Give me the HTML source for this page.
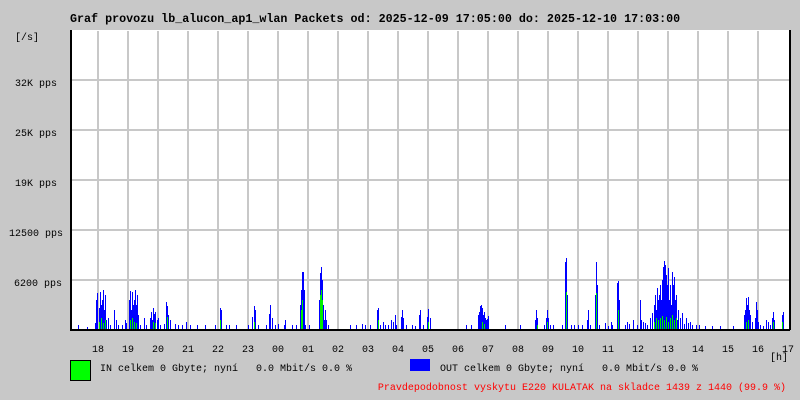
<!DOCTYPE html>
<html><head><meta charset="utf-8"><style>
html,body{margin:0;padding:0;background:#c8c8c8;}
svg{display:block;}
text{font-family:"Liberation Mono","DejaVu Sans Mono",monospace;font-size:10px;white-space:pre;}
</style></head><body>
<svg width="800" height="400" xmlns="http://www.w3.org/2000/svg" xml:space="preserve">
<rect width="800" height="400" fill="#c8c8c8"/>
<text x="70" y="22" font-weight="bold" style="font-size:11.7px">Graf provozu lb_alucon_ap1_wlan Packets od: 2025-12-09 17:05:00 do: 2025-12-10 17:03:00</text>
<rect x="70" y="30" width="720" height="300" fill="#fff"/>
<g stroke="#c8c8c8" stroke-width="2" shape-rendering="crispEdges">
<path d="M71 80H789M71 130H789M71 180H789M71 230H789M71 280H789"/>
<path d="M98 31V329M128 31V329M158 31V329M188 31V329M218 31V329M248 31V329M278 31V329M308 31V329M338 31V329M368 31V329M398 31V329M428 31V329M458 31V329M488 31V329M518 31V329M548 31V329M578 31V329M608 31V329M638 31V329M668 31V329M698 31V329M728 31V329M758 31V329"/>
</g>
<g transform="translate(0.5,0)" shape-rendering="crispEdges">
<g stroke="#0000ff" stroke-width="1" fill="none">
<path d="M78 329V325M87 329V327M95 329V323M96 329V300M97 329V293M99 329V308M100 329V292M101 329V305M102 329V300M103 329V290M104 329V310M105 329V295M106 329V320M108 329V318M110 329V325M114 329V310M116 329V320M118 329V325M122 329V325M125 329V320M126 329V323
M129 329V300M130 329V291M131 329V310M132 329V292M133 329V305M134 329V300M135 329V290M136 329V305M137 329V295M138 329V315M140 329V325M144 329V318M146 329V325
M150 329V318M151 329V312M152 329V320M153 329V308M154 329V314M155 329V312M157 329V320M158 329V318M160 329V325M164 329V324M166 329V302M167 329V306M168 329V315M170 329V320M175 329V324M178 329V325
M182 329V325M186 329V322M190 329V325M197 329V325M205 329V325M215 329V325M220 329V308M221 329V310M226 329V325M229 329V325
M236 329V325M248 329V325M252 329V317M254 329V306M255 329V310M258 329V325M266 329V325M269 329V314M270 329V305M272 329V318M275 329V325M278 329V324M284 329V325M285 329V320
M292 329V325M296 329V325M300 329V305M301 329V290M302 329V272M303 329V272M304 329V290M305 329V325M309 329V325M319 329V300M320 329V273M321 329V267M322 329V280M323 329V305M324 329V320M325 329V310M326 329V320M328 329V325
M350 329V325M356 329V325M362 329V324M365 329V325M370 329V325M377 329V310M378 329V308M380 329V325M383 329V322M385 329V325M388 329V325M391 329V320M393 329V322M395 329V315M396 329V325M401 329V317M402 329V310M403 329V318M406 329V325M412 329V325M415 329V326M419 329V315M420 329V310M423 329V325M427 329V317M428 329V309M430 329V318
M466 329V325M471 329V325M478 329V315M479 329V312M480 329V306M481 329V305M482 329V308M483 329V315M484 329V312M485 329V318M486 329V320M487 329V319M488 329V316
M505 329V325M520 329V325M535 329V320M536 329V310M537 329V318M544 329V325M546 329V318M547 329V310M548 329V318M550 329V325M553 329V325M562 329V325M565 329V262M566 329V258M567 329V295M571 329V325M574 329V325M578 329V325M582 329V325
M587 329V320M588 329V310M590 329V325M595 329V295M596 329V262M597 329V285M599 329V325M605 329V323M608 329V326M611 329V322M612 329V325M617 329V283M618 329V281M619 329V300
M625 329V325M627 329V322M629 329V324M633 329V320M637 329V325M640 329V300M641 329V320M643 329V322M645 329V323M647 329V325M650 329V318M652 329V313M654 329V305M655 329V295M656 329V310M657 329V288M658 329V300M659 329V295M660 329V285M661 329V300M662 329V280M663 329V267M664 329V261M665 329V265M666 329V275M667 329V285M668 329V268M669 329V300M670 329V285M671 329V305M672 329V272M673 329V285M674 329V277M675 329V300M676 329V295M677 329V320M678 329V310M680 329V318M682 329V313M684 329V324M686 329V318M688 329V323M690 329V322M692 329V325M696 329V325M699 329V325M705 329V326M712 329V326M720 329V326
M733 329V326M744 329V315M745 329V310M746 329V298M747 329V305M748 329V297M749 329V310M750 329V315M752 329V322M755 329V318M756 329V302M757 329V310M758 329V322M760 329V325M763 329V326M766 329V320M768 329V322M770 329V325M772 329V318M773 329V312M774 329V320M782 329V315M783 329V312M789 329V322"/>
</g>
<g stroke="#00ee00" stroke-width="1" fill="none">
<path d="M99 329V322M101 329V318M103 329V323M105 329V320M130 329V320M132 329V318M134 329V322M136 329V323M153 329V322M155 329V323M167 329V317M220 329V320M254 329V322M301 329V310M302 329V300M320 329V295M321 329V290M322 329V300M378 329V320M428 329V322M482 329V322M484 329V324M537 329V325M547 329V322M566 329V292M596 329V293M618 329V310M654 329V322M656 329V318M658 329V320M660 329V318M662 329V316M664 329V320M666 329V317M668 329V322M670 329V318M672 329V315M674 329V320M676 329V318M746 329V322M748 329V320M773 329V322M782 329V322M789 329V322"/>
</g>
</g>
<path d="M71 30V330M70 330H790M790 30V330" stroke="#000" stroke-width="2" fill="none"/>
<text x="15" y="40">[/s]</text>
<text x="57" y="86" text-anchor="end">32K pps</text>
<text x="57" y="136" text-anchor="end">25K pps</text>
<text x="57" y="186" text-anchor="end">19K pps</text>
<text x="63" y="236" text-anchor="end">12500 pps</text>
<text x="62" y="286" text-anchor="end">6200 pps</text>
<g text-anchor="middle">
<text x="98" y="352">18</text><text x="128" y="352">19</text><text x="158" y="352">20</text><text x="188" y="352">21</text><text x="218" y="352">22</text><text x="248" y="352">23</text><text x="278" y="352">00</text><text x="308" y="352">01</text><text x="338" y="352">02</text><text x="368" y="352">03</text><text x="398" y="352">04</text><text x="428" y="352">05</text><text x="458" y="352">06</text><text x="488" y="352">07</text><text x="518" y="352">08</text><text x="548" y="352">09</text><text x="578" y="352">10</text><text x="608" y="352">11</text><text x="638" y="352">12</text><text x="668" y="352">13</text><text x="698" y="352">14</text><text x="728" y="352">15</text><text x="758" y="352">16</text><text x="788" y="352">17</text>
</g>
<text x="770" y="360">[h]</text>
<rect x="70.5" y="360.5" width="20" height="20" fill="#00ff00" stroke="#000"/>
<text x="100" y="371">IN celkem 0 Gbyte; nyní   0.0 Mbit/s 0.0 %</text>
<rect x="410" y="359" width="20" height="12" fill="#0000ff"/>
<text x="440" y="371">OUT celkem 0 Gbyte; nyní   0.0 Mbit/s 0.0 %</text>
<text x="786" y="390" text-anchor="end" fill="#ff0000">Pravdepodobnost vyskytu E220 KULATAK na skladce 1439 z 1440 (99.9 %)</text>
</svg>
</body></html>
